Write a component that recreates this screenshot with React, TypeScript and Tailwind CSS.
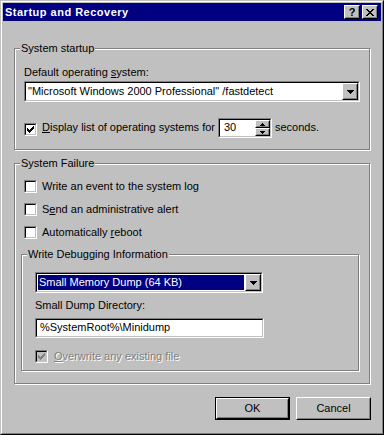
import React from 'react';

// classic 3D frames
function Sunken({ className = '', inner = 'bg-white', children }: { className?: string; inner?: string; children?: React.ReactNode }) {
  return (
    <div className={`border border-t-[#808080] border-l-[#808080] border-r-white border-b-white ${className}`}>
      <div className={`flex h-full w-full border border-t-black border-l-black border-r-[#c0c0c0] border-b-[#c0c0c0] ${inner}`}>
        {children}
      </div>
    </div>
  );
}

function Raised({ className = '', children }: { className?: string; children?: React.ReactNode }) {
  return (
    <div className={`border border-t-white border-l-white border-r-black border-b-black ${className}`}>
      <div className="flex h-full w-full items-center justify-center border border-t-[#c0c0c0] border-l-[#c0c0c0] border-r-[#808080] border-b-[#808080] bg-[#c0c0c0]">
        {children}
      </div>
    </div>
  );
}

function Pixels({ rows, color = '#000' }: { rows: string[]; color?: string }) {
  return (
    <svg width={rows[0].length} height={rows.length} shapeRendering="crispEdges" className="block">
      {rows.flatMap((r, y) =>
        r.split('').map((c, x) =>
          c === 'X' ? <rect key={`${x}-${y}`} x={x} y={y} width={1} height={1} fill={color} /> : null
        )
      )}
    </svg>
  );
}

const CHECK = ['......X', '.....XX', 'X...XXX', 'XX.XXX.', 'XXXXX..', '.XXX...', '..X....'];
const DOWN = ['XXXXXXX', '.XXXXX.', '..XXX..', '...X...'];
const SPIN_UP = ['..X..', '.XXX.', 'XXXXX'];
const SPIN_DOWN = ['XXXXX', '.XXX.', '..X..'];
const CLOSE = ['XX....XX', '.XX..XX.', '..XXXX..', '...XX...', '..XXXX..', '.XX..XX.', 'XX....XX'];

function CheckBox({ checked = false, disabled = false }: { checked?: boolean; disabled?: boolean }) {
  return (
    <Sunken className="h-[13px] w-[13px] shrink-0" inner={disabled ? 'bg-[#c0c0c0]' : 'bg-white'}>
      {checked && (
        <div className="pl-px pt-px">
          <Pixels rows={CHECK} color={disabled ? '#808080' : '#000'} />
        </div>
      )}
    </Sunken>
  );
}

function Group({ label, className = '', children }: { label: string; className?: string; children?: React.ReactNode }) {
  return (
    <div className={`relative border border-[#808080] shadow-[inset_1px_1px_0_#fff,1px_1px_0_#fff] ${className}`}>
      <span className="absolute -top-[7px] left-[5px] bg-[#c0c0c0] px-px leading-[13px]">{label}</span>
      {children}
    </div>
  );
}

function DropButton() {
  return (
    <Raised className="h-full w-[16px] shrink-0">
      <Pixels rows={DOWN} />
    </Raised>
  );
}

export default function App() {
  return (
    <div className="font-['Liberation_Sans',Arial,sans-serif] text-[11px] leading-[13px] text-black">
      <div className="h-[435px] w-[384px] border border-t-[#c0c0c0] border-l-[#c0c0c0] border-r-black border-b-black bg-[#c0c0c0]">
        <div className="flex h-full flex-col border border-t-white border-l-white border-r-[#808080] border-b-[#808080] p-px">
          {/* title bar */}
          <div className="flex h-[18px] shrink-0 items-center bg-[#000080] pl-[2px] pr-[3px]">
            <span className="font-bold tracking-[0.5px] text-white">Startup and Recovery</span>
            <div className="ml-auto flex gap-[2px]">
              <Raised className="h-[14px] w-[16px]">
                <span className="text-[11px] font-bold leading-[10px]">?</span>
              </Raised>
              <Raised className="h-[14px] w-[16px]">
                <Pixels rows={CLOSE} />
              </Raised>
            </div>
          </div>

          <div className="flex flex-1 flex-col pl-[11px]">
            <Group label="System startup" className="mt-[27px] h-[102px] w-[356px] pl-[9px] pt-[17px]">
              <div>
                Default operating <span className="underline">s</span>ystem:
              </div>
              <Sunken className="mt-[2px] h-[21px] w-[336px]">
                <div className="flex-1 pl-[2px] pt-[2px]">"Microsoft Windows 2000 Professional" /fastdetect</div>
                <DropButton />
              </Sunken>
              <div className="mt-[16px] flex h-[20px] items-start">
                <div className="mt-[5px]">
                  <CheckBox checked />
                </div>
                <div className="ml-[5px] mt-[3px] w-[176px]">
                  <span className="underline">D</span>isplay list of operating systems for
                </div>
                <Sunken className="h-[20px] w-[54px]">
                  <div className="flex-1 pl-[4px] pt-px">30</div>
                  <div className="flex w-[15px] flex-col">
                    <Raised className="h-[8px] w-full">
                      <Pixels rows={SPIN_UP} />
                    </Raised>
                    <Raised className="h-[8px] w-full">
                      <Pixels rows={SPIN_DOWN} />
                    </Raised>
                  </div>
                </Sunken>
                <div className="ml-[3px] mt-[3px]">seconds.</div>
              </div>
            </Group>

            <Group label="System Failure" className="mt-[13px] h-[221px] w-[356px] pl-[9px] pt-[16px]">
              <div className="flex flex-col gap-[10px]">
                <div className="flex h-[13px] items-center">
                  <CheckBox />
                  <span className="ml-[5px]">Write an event to the system log</span>
                </div>
                <div className="flex h-[13px] items-center">
                  <CheckBox />
                  <span className="ml-[5px]">
                    S<span className="underline">e</span>nd an administrative alert
                  </span>
                </div>
                <div className="flex h-[13px] items-center">
                  <CheckBox />
                  <span className="ml-[5px]">
                    Automatically <span className="underline">r</span>eboot
                  </span>
                </div>
              </div>

              <Group label="Write Debugging Information" className="-ml-[3px] mt-[15px] h-[117px] w-[338px] pl-[13px] pt-[17px]">
                <Sunken className="h-[21px] w-[228px]">
                  <div className="flex-1 p-px">
                    <div className="h-full bg-[#000080] pl-[1px] pt-px text-white">Small Memory Dump (64 KB)</div>
                  </div>
                  <DropButton />
                </Sunken>
                <div className="mt-[6px]">Small Dump Directory:</div>
                <Sunken className="mt-[6px] h-[20px] w-[229px]">
                  <div className="pl-[3px] pt-px">%SystemRoot%\Minidump</div>
                </Sunken>
                <div className="mt-[12px] flex h-[13px] items-center">
                  <CheckBox checked disabled />
                  <span className="ml-[6px] text-[#808080] [text-shadow:1px_1px_0_#fff]">
                    <span className="underline">O</span>verwrite any existing file
                  </span>
                </div>
              </Group>
            </Group>

            <div className="mt-[13px] flex justify-end gap-[6px] pr-[10px]">
              <div className="h-[23px] w-[75px] border border-black">
                <Raised className="h-full w-full">OK</Raised>
              </div>
              <Raised className="h-[23px] w-[75px]">Cancel</Raised>
            </div>
          </div>
        </div>
      </div>
    </div>
  );
}
